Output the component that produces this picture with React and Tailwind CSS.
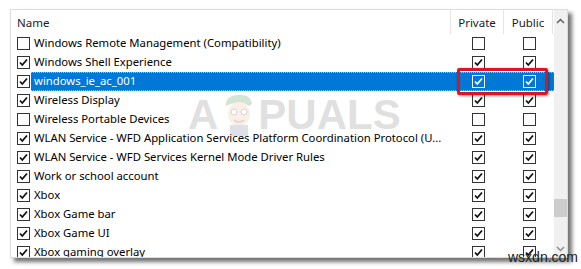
import React from "react";

const rows = [
  { name: "Windows Remote Management (Compatibility)", on: false, pr: false, pu: false },
  { name: "Windows Shell Experience", on: true, pr: true, pu: true },
  { name: "windows_ie_ac_001", on: true, pr: true, pu: true, sel: true },
  { name: "Wireless Display", on: true, pr: true, pu: true },
  { name: "Wireless Portable Devices", on: false, pr: false, pu: false },
  { name: "WLAN Service - WFD Application Services Platform Coordination Protocol (U...", on: true, pr: true, pu: true },
  { name: "WLAN Service - WFD Services Kernel Mode Driver Rules", on: true, pr: true, pu: true },
  { name: "Work or school account", on: true, pr: true, pu: true },
  { name: "Xbox", on: true, pr: true, pu: true },
  { name: "Xbox Game bar", on: true, pr: true, pu: true },
  { name: "Xbox Game UI", on: true, pr: true, pu: true },
  { name: "Xbox gaming overlay", on: true, pr: true, pu: true },
];

function Box({ checked, light }) {
  return (
    <div
      className={
        "w-[13px] h-[13px] shrink-0 border flex items-center justify-center " +
        (light ? "border-white bg-[#0078d7]" : "border-[#333333] bg-white")
      }
    >
      {checked && (
        <svg width="9" height="9" viewBox="0 0 9 9">
          <path
            d="M1 4.5 L3.3 7 L8 1.5"
            fill="none"
            stroke={light ? "#ffffff" : "#111111"}
            strokeWidth="1.8"
          />
        </svg>
      )}
    </div>
  );
}

export default function App() {
  return (
    <div
      className="relative w-[581px] h-[269px] bg-white pl-[10px] pt-[9px] overflow-hidden"
      style={{ fontFamily: '"Noto Sans", "Open Sans", sans-serif' }}
    >
      <div className="w-[558px] h-[249px] bg-white border border-[#dcdcdc] shadow-[4px_4px_4px_rgba(0,0,0,0.55)] flex overflow-hidden">
        <div className="flex-1 flex flex-col">
          <div className="h-[24px] flex text-[11.5px] text-[#1a1a1a] shrink-0">
            <div className="w-[439px] pl-[6px] flex items-center pt-[1px]">Name</div>
            <div className="w-[53px] border-l border-[#e5e5e5] flex items-center justify-center pt-[1px]">Private</div>
            <div className="w-[50px] border-l border-r border-[#e5e5e5] flex items-center justify-center pt-[1px]">Public</div>
          </div>
          {rows.map((r, i) => (
            <div key={i} className="h-[19px] shrink-0 flex items-center text-[11.3px] text-black">
              <div className="w-[20px] pl-[6px] flex items-center">
                <Box checked={r.on} />
              </div>
              <div
                className={
                  "flex-1 h-[19px] flex items-center " +
                  (r.sel ? "bg-[#0078d7] text-white border-y border-dotted border-[#9cc4ea]" : "")
                }
              >
                <div className="w-[420px] pl-[3px] whitespace-nowrap overflow-hidden">{r.name}</div>
                <div className="w-[53px] flex justify-center pl-[2px]">
                  <Box checked={r.pr} light={r.sel} />
                </div>
                <div className="w-[50px] flex justify-center">
                  <Box checked={r.pu} light={r.sel} />
                </div>
              </div>
            </div>
          ))}
        </div>
        <div className="w-[15px] bg-[#f0f0f0] flex flex-col items-center">
          <div className="h-[19px] flex items-center justify-center pt-[2px]">
            <svg width="9" height="6" viewBox="0 0 9 6">
              <path d="M1 5 L4.5 1.5 L8 5" fill="none" stroke="#606060" strokeWidth="1.5" />
            </svg>
          </div>
          <div className="flex-1 w-full flex flex-col justify-end pb-[15px]">
            <div className="w-full h-[18px] bg-[#cdcdcd] mb-[9px]"></div>
          </div>
          <div className="h-[16px] flex items-center justify-center">
            <svg width="9" height="6" viewBox="0 0 9 6">
              <path d="M1 1 L4.5 4.5 L8 1" fill="none" stroke="#909090" strokeWidth="1.5" />
            </svg>
          </div>
        </div>
      </div>

      {/* watermark */}
      <div className="absolute left-[188px] top-[92px] flex items-end opacity-20 select-none pointer-events-none">
        <span className="text-[42px] font-bold text-[#6a6a6a] leading-none" style={{ fontFamily: '"Liberation Sans", sans-serif' }}>A</span>
        <svg width="38" height="44" viewBox="0 0 38 44" className="mx-[1px]">
          <path d="M6 14 Q8 2 20 3 Q32 2 33 12 L30 14 Q22 8 12 12 Z" fill="#2f7d32" />
          <ellipse cx="20" cy="22" rx="11" ry="12" fill="#e9b58a" />
          <circle cx="15" cy="20" r="3" fill="#fff" stroke="#333" />
          <circle cx="25" cy="20" r="3" fill="#fff" stroke="#333" />
          <path d="M15 28 Q20 32 25 28" fill="none" stroke="#333" strokeWidth="1.5" />
          <rect x="11" y="33" width="18" height="11" fill="#5a6b8c" />
        </svg>
        <span className="text-[42px] font-bold text-[#6a6a6a] leading-none" style={{ fontFamily: '"Liberation Sans", sans-serif' }}>PUALS</span>
      </div>

      {/* red highlight box */}
      <div className="absolute left-[457px] top-[68px] w-[91px] h-[27px] border-[3px] border-[#dd1520] rounded-[2px] shadow-[1px_1px_3px_rgba(0,0,0,0.45)]"></div>

      <div
        className="absolute left-[508px] top-[250px] text-[14px] leading-none text-[#222222]"
        style={{ fontFamily: '"Liberation Sans", sans-serif' }}
      >
        wsxdn.com
      </div>
    </div>
  );
}
